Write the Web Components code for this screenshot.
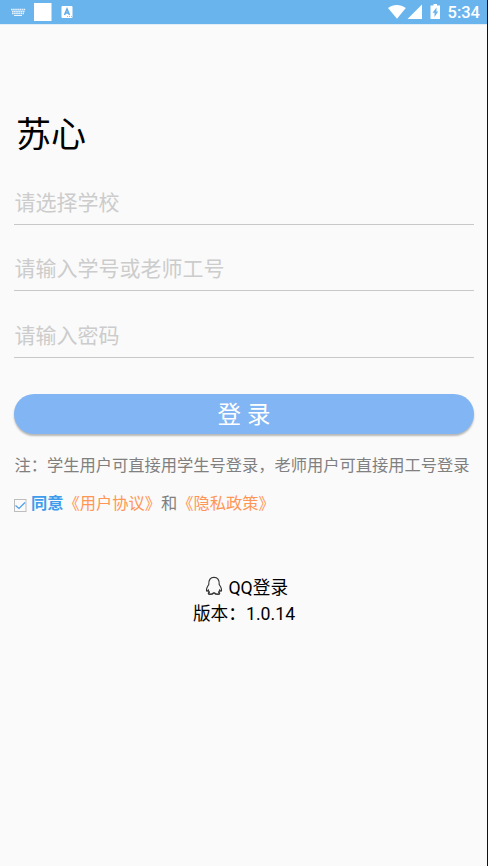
<!DOCTYPE html>
<html lang="zh-CN">
<head>
<meta charset="utf-8">
<title>苏心</title>
<style>
html,body{margin:0;height:100%;background:#fafafa}
body{font-family:Roboto,"Noto Sans CJK SC",sans-serif;overflow:hidden}
</style>
</head>
<body>
<login-screen></login-screen>
<script>
function define(name, html) {
  customElements.define(name, class extends HTMLElement {
    constructor() {
      super();
      const t = document.createElement('template');
      t.innerHTML = html;
      this.attachShadow({mode: 'open'}).append(t.content.cloneNode(true));
    }
  });
}

define('status-bar', `
<style>
:host{display:flex;align-items:flex-start;height:24px;background:#6ab4ee;color:#fff;box-shadow:0 1px 0 #e3edf5}
svg{display:block}
.l{margin-right:auto}
time{font:500 16.5px/24px Roboto,sans-serif;margin:1px 7px 0 6px}
</style>
<svg class="l" width="90" height="24" viewBox="0 0 90 24" fill="#fff">
  <g stroke="#fff" fill="none" opacity=".85"><path d="M11 9.500H25.500M12 11.500H25M12 13.500H24" stroke-dasharray="1.600 .5" stroke-width="1.400"/><path d="M14 15.500H22"/></g>
  <rect x="34" y="3" width="17.500" height="18"/>
  <rect x="61.500" y="6" width="11" height="12" rx="1"/>
  <path d="M64.500 15L67 9L69.500 15M65.300 13H68.700" fill="none" stroke="#5caae8" stroke-width="1.500"/>
  <path d="M67 16.500H72" stroke="#8fc5ef" stroke-dasharray="1 1"/>
</svg>
<svg width="54" height="24" viewBox="0 0 54 24" fill="#fff">
  <path d="M0 8C5 4 12.500 4 17.800 8L9 18.800Z"/>
  <path d="M34 4.500V19H19.500Z"/>
  <path fill-rule="evenodd" d="M42.500 5.500H45.500V4H49V5.500H52V19H42.500ZM48.500 7.500L44.500 12.800H46.500V17L50.200 11.500H48.500Z"/>
</svg>
<time>5:34</time>`);

define('form-field', `
<style>
:host{display:block;box-sizing:border-box;height:45px;border-bottom:1px solid #c8c8c8;color:#ccc;font-size:21px;line-height:46px;padding-left:.5px;margin-bottom:21.3px;white-space:nowrap}
</style><slot></slot>`);

define('login-button', `
<style>
:host{display:block;height:40px;border-radius:20px;background:#82b5f3;color:#fff;text-align:center;font-size:23.5px;line-height:43px;box-shadow:0 2px 2px rgba(0,0,0,.27)}
</style><slot></slot>`);

define('check-mark', `
<style>:host{display:block;width:13px;height:13px;margin:3px 4px 0 0}svg{display:block}</style>
<svg width="13" height="13" viewBox="0 0 13 13" fill="none"><rect x=".5" y=".5" width="11.500" height="12" stroke="#bdbdbd"/><path d="M1.500 6.500L5 9.500L11 3.500" stroke="#4a9eea" stroke-width="1.200"/></svg>`);

define('agreement-row', `
<style>
:host{display:flex;align-items:center;height:24px;font-size:16.25px;line-height:24px;color:#808080;white-space:nowrap}
</style><check-mark></check-mark><slot></slot>`);

define('qq-login', `
<style>
:host{display:flex;justify-content:center;align-items:center;height:26px;font-size:17.7px;line-height:26px;padding-left:5px}
svg{display:block;margin:-5px 5.500px 0 0}
</style>
<svg width="18" height="20" viewBox="0 0 18 20" fill="none" stroke="#333" stroke-width="1.200">
<path d="M3.800 8.500C3.500 3.500 5.500 1.300 9 1.300S14.500 3.500 14.200 8.500C16 11 16.800 13 16.400 14.800C15.800 15.500 15.200 14.800 14.700 14.200C14.500 15.500 14 16 13.400 16.500M4.600 16.500C4 16 3.500 15.500 3.300 14.200C2.800 14.800 2.200 15.500 1.600 14.800C1.200 13 2 11 3.800 8.500"/>
<path d="M4.600 16.300C2.800 17 3.200 18.300 5 18.300C7 18.300 8 17.800 8.600 17H9.400C10 17.800 11 18.300 13 18.300C14.800 18.300 15.200 17 13.400 16.300" stroke-width="1.500"/></svg>
<slot></slot>`);

define('login-screen', `
<style>
:host{display:block;box-sizing:border-box;width:488px;height:866px;background:#fafafa;border-right:1px solid #111;color:#000}
main{padding:0 13px 0 14px}
h1{font-size:35px;font-weight:400;line-height:50px;margin:87px 0 19px 2px}
login-button{margin-top:36px}
.note{font-size:16.25px;line-height:24px;color:#808080;white-space:nowrap;margin:20px 0 14px .5px}
b{color:#3d9ceb;font-weight:700}
a{color:#ff9655}
qq-login{margin-top:59.500px}
.ver{text-align:center;font-size:17.7px;line-height:26px}
</style>
<status-bar></status-bar>
<main>
<h1>苏心</h1>
<form-field>请选择学校</form-field>
<form-field>请输入学号或老师工号</form-field>
<form-field>请输入密码</form-field>
<login-button>登 录</login-button>
<div class="note">注：学生用户可直接用学生号登录，老师用户可直接用工号登录</div>
<agreement-row><b>同意</b><a>《用户协议》</a><span>和</span><a>《隐私政策》</a></agreement-row>
<qq-login>QQ登录</qq-login>
<div class="ver">版本：1.0.14</div>
</main>`);
</script>
</body>
</html>
